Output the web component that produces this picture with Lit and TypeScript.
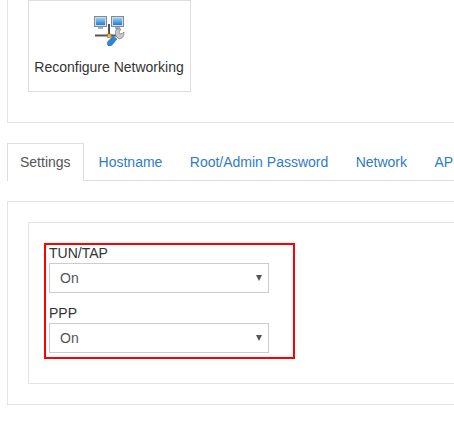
import { LitElement, html, css } from "lit";
import { customElement } from "lit/decorators.js";

@customElement("app-root")
export class AppRoot extends LitElement {
  static styles = css`
    :host { display: block; width: 454px; height: 425px; overflow: hidden; background: #fff;
      font-family: "Liberation Sans", Arial, sans-serif; font-size: 14px; color: #333; }
    .page { width: 700px; padding-left: 7px; box-sizing: content-box; }
    .panel { border: 1px solid #e3e3e3; box-sizing: border-box; }
    .top { border-top: none; height: 123px; padding-left: 20px; }
    .tile { width: 163px; height: 92px; box-sizing: border-box; border: 1px solid #ddd;
      display: flex; flex-direction: column; align-items: center; }
    .tile svg { display: block; margin: 13px 1px 0 0; }
    .tile span { margin-top: 11px; line-height: 20px; white-space: nowrap; transform: translateX(-0.5px); }
    .tabs { display: flex; margin-top: 20px; height: 38px; border-bottom: 1px solid #ddd; box-sizing: border-box; }
    .tab { padding: 0 12.7px; height: 38px; line-height: 36px; box-sizing: border-box; color: #2f7cc4;
      white-space: nowrap; border: 1px solid transparent; border-bottom: none; }
    .tab.active { color: #555; border-color: #ddd; background: #fff; margin-right: 1.3px; padding: 0 12px; }
    .body { margin-top: 20px; height: 204px; padding: 20px; }
    .inner { height: 162px; padding: 20px 0 0 15px; }
    .red { width: 251px; height: 116px; box-sizing: border-box; border: 2px solid #f00; padding: 0 0 0 3px; }
    label { display: block; line-height: 16px; height: 18px; color: #333; }
    .select { width: 220px; height: 30px; box-sizing: border-box; border: 1px solid #ccc; margin-bottom: 12px;
      display: flex; align-items: center; justify-content: space-between; padding: 0 6px 0 10px; color: #555; background: #fff; }
    .arrow { width: 0; height: 0; border-left: 3px solid transparent; border-right: 3px solid transparent; border-top: 6px solid #555; }
  `;

  render() {
    return html`<div class="page">
      <div class="panel top">
        <div class="tile">
          <svg width="32" height="32" viewBox="0 0 32 32">
            <defs>
              <linearGradient id="s" x1="0" y1="0" x2="0" y2="1"><stop offset="0" stop-color="#8fd0f6"/><stop offset="1" stop-color="#1f7fd6"/></linearGradient>
            </defs>
            <rect x="15" y="10" width="2" height="12" fill="#555"/>
            <rect x="2" y="20.500" width="23" height="2" fill="#555"/>
            <rect x="1.500" y="2.500" width="12" height="10" fill="#d5dade" stroke="#7e8a94"/>
            <rect x="3" y="4" width="9" height="7" fill="url(#s)"/>
            <rect x="5" y="13" width="5" height="2" fill="#a9b1b8"/>
            <rect x="18.500" y="2.500" width="12" height="10" fill="#d5dade" stroke="#7e8a94"/>
            <rect x="20" y="4" width="9" height="7" fill="url(#s)"/>
            <rect x="22" y="13" width="5" height="2" fill="#a9b1b8"/>
            <path d="M24 15 l4 0 l-2 3 l1 2 l3-1 l1-1 q.5 4-2 6 l-3 1 l-3-3 q-2-4 1-8z" fill="#c4c8cc" stroke="#7b8187" stroke-width=".7"/>
            <rect x="14.500" y="20" width="3.500" height="3.500" fill="#f5b83d" stroke="#a86f10" stroke-width=".6"/>
            <path d="M20 22 l4 3 l-5 6 q-2 2-4 .5 q-1.500-2 0-4z" fill="#2f86d6" stroke="#1c5a9a" stroke-width=".5"/>
          </svg>
          <span>Reconfigure Networking</span>
        </div>
      </div>
      <div class="tabs">
        <div class="tab active">Settings</div>
        <div class="tab">Hostname</div>
        <div class="tab">Root/Admin Password</div>
        <div class="tab">Network</div>
        <div class="tab">API</div>
      </div>
      <div class="panel body">
        <div class="panel inner">
          <div class="red">
            <label>TUN/TAP</label>
            <div class="select"><span>On</span><i class="arrow"></i></div>
            <label>PPP</label>
            <div class="select"><span>On</span><i class="arrow"></i></div>
          </div>
        </div>
      </div>
    </div>`;
  }
}
